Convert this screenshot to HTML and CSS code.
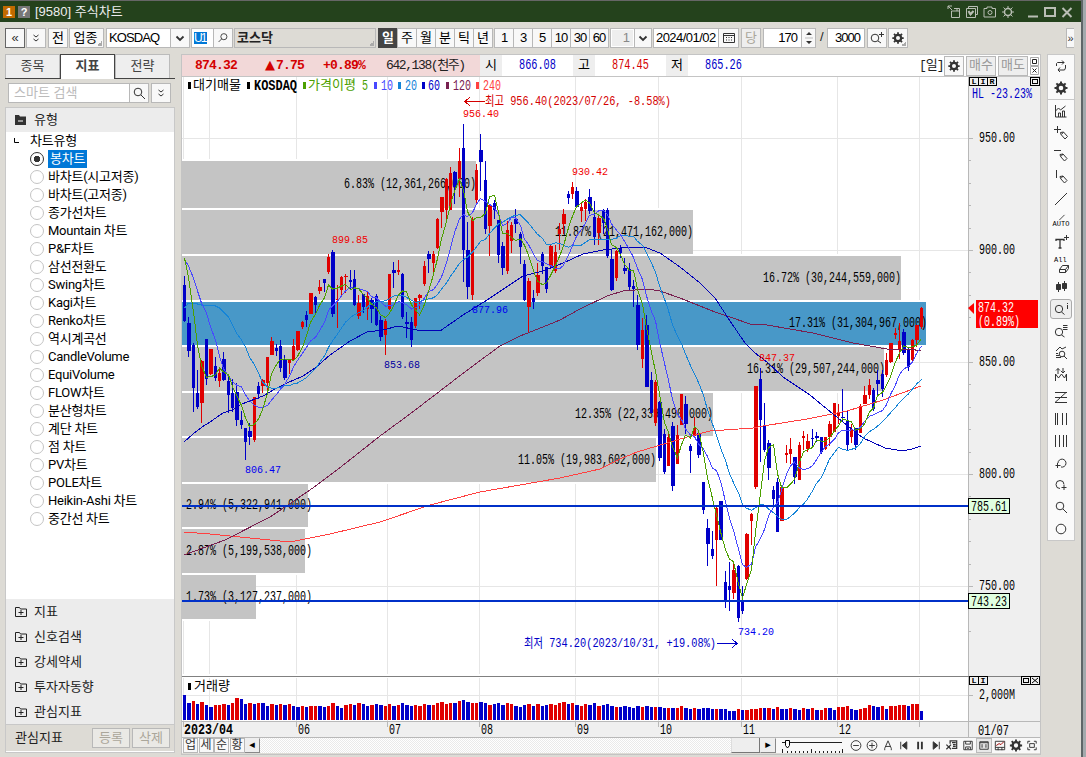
FILE: index.html
```
<!DOCTYPE html>
<html lang="ko">
  <head>
    <meta charset="UTF-8" />
    <title>[9580] 주식차트</title>
    <link rel="stylesheet" href="styles.css">
  </head>
  <body>
    <svg class="defs" width="0" height="0">
      <defs>
        <symbol id="gear" viewBox="0 0 16 16"><circle cx="8" cy="8" r="3.6" fill="none" stroke="currentColor" stroke-width="2.6"/><path d="M8 1.5v3M8 11.5v3M1.5 8h3M11.500 8h3M3.400 3.400l2 2M10.600 10.600l2 2M12.600 3.400l-2 2M5.400 10.600l-2 2" stroke-width="2"/></symbol>
        <symbol id="search" viewBox="0 0 16 16"><circle cx="7" cy="7" r="3.8"/><path d="M10 10l4 4"/></symbol>
        <symbol id="find" viewBox="0 0 16 16"><circle cx="9" cy="6.500" r="3.500"/><path d="M6.500 9L3 12.500"/></symbol>
        <symbol id="zoomplus" viewBox="0 0 16 16"><circle cx="6" cy="8" r="3.800"/><path d="M9 11l3 2M10 4.500h5M12.500 2v5"/></symbol>
        <symbol id="folder" viewBox="0 0 12 12"><path d="M.5 10.500v-9h4l1 1.500h6v7.500zM3.500 6.500h5M6 4v5"/></symbol>
        <symbol id="down" viewBox="0 0 10 10"><path d="M1.500 3.500L5 7l3.500-3.500" stroke-width="1.800"/></symbol>
        <symbol id="ddown" viewBox="0 0 10 10"><path d="M2.500 2L5 4l2.500-2M2.500 6L5 8l2.500-2"/></symbol>
        <symbol id="calendar" viewBox="0 0 12 12"><path d="M.5 1.500h11v9H.5zM.5 3.500h11M3 5.500h1M5.500 5.500h1M8 5.500h1M3 8h1M5.500 8h1M8 8h1"/></symbol>
      </defs>
    </svg>

    <div class="window">
      <header class="titlebar">
        <span class="badge orange">1</span>
        <span class="badge grey">?</span>
        <span class="title">[9580] 주식차트</span>
        <div class="window-icons">
          <svg width="14" height="14" viewBox="0 0 14 14"><path d="M1 4V1h4M1 1l4 4M4.500 6v6.500h8v-9H7M4.500 6h8M10 3v3"/></svg>
          <svg width="14" height="14" viewBox="0 0 14 14"><path d="M3.500 3V1.500h9v8H11M1.500 3.500h9v9h-9zM3.500 7.500l2 3 3-4" /><path d="M3.500 6l2 3 3-3" stroke-width="2"/></svg>
          <svg width="14" height="14" viewBox="0 0 14 14"><path d="M1 3.500h3V2h5v1.500h3.500v8.500H1z"/><circle cx="7" cy="7.500" r="2"/></svg>
          <svg width="14" height="14" viewBox="0 0 14 14"><circle cx="7" cy="7" r="3.500" stroke-width="1.500"/><path d="M7 1v2M7 11v2M1 7h2M11 7h2M2.500 2.500l1.500 1.500M10 10l1.500 1.500M11.500 2.500L10 4M4 10l-1.500 1.500"/></svg>
          <svg class="win" width="12" height="14" viewBox="0 0 12 14"><path d="M1 11.500h10" stroke-width="2"/></svg>
          <svg width="14" height="14" viewBox="0 0 14 14"><path d="M2 3h10v8H2z" stroke-width="2"/></svg>
          <svg width="12" height="14" viewBox="0 0 12 14"><path d="M1.500 3l9 9M10.500 3l-9 9" stroke-width="2"/></svg>
        </div>
      </header>

      <div class="toolbar">
        <div class="group spaced">
          <button class="sq strong">«</button>
          <button class="sq"><svg width="10" height="10"><use href="#ddown"/></svg></button>
        </div>
        <div class="group spaced">
          <button class="sq ink">전</button>
          <button class="ink wide corner">업종</button>
        </div>
        <div class="combo market"><span>KOSDAQ</span><i><svg width="10" height="10"><use href="#down"/></svg></i></div>
        <div class="combo code"><span><b>U1</b></span><i><svg width="14" height="14"><use href="#find"/></svg></i></div>
        <div class="name corner">코스닥</div>
        <div class="group joined period">
          <button class="on">일</button><button>주</button><button>월</button><button>분</button><button>틱</button><button>년</button>
        </div>
        <div class="group joined minutes">
          <button>1</button><button>3</button><button>5</button><button>10</button><button>30</button><button>60</button>
        </div>
        <div class="combo step"><span>1</span><i><svg width="10" height="10"><use href="#down"/></svg></i></div>
        <div class="combo date"><span>2024/01/02</span><i><svg width="12" height="12"><use href="#calendar"/></svg></i></div>
        <button class="sq off">당</button>
        <div class="combo count"><span>170</span><i class="spin"><svg width="8" height="16" viewBox="0 0 8 16"><path d="M0 8h8" stroke="#bbb"/><path d="M1 5l3-3 3 3zM1 11l3 3 3-3z" fill="currentColor" stroke="none"/></svg></i></div>
        <span class="slash">/</span>
        <div class="combo total"><span>3000</span></div>
        <div class="group">
          <button class="sq"><svg width="16" height="16"><use href="#zoomplus"/></svg></button>
          <button class="sq corner"><svg width="14" height="14"><use href="#gear"/></svg></button>
        </div>
        <button class="more">»</button>
      </div>

      <div class="workspace">
        <aside class="sidebar">
          <nav class="tabs"><a>종목</a><a class="active">지표</a><a>전략</a></nav>
          <div class="search">
            <div class="combo"><span>스마트 검색</span><i><svg width="16" height="16"><use href="#search"/></svg></i></div>
            <button class="sq"><svg width="10" height="10"><use href="#ddown"/></svg></button>
          </div>
          <div class="panel">
            <h2><svg width="11" height="10" viewBox="0 0 11 10"><path d="M0 0h4l1 1.500h6V10H0z" fill="#333" stroke="none"/><path d="M3 6h5" stroke="#fff"/></svg>유형</h2>
            <div class="tree">
              <p class="root"><svg width="6" height="6" viewBox="0 0 6 6"><path d="M.5 0v4.500H5"/></svg>차트유형</p>
              <ul>
                <li class="checked"><span>봉차트</span></li>
                <li><span>바차트(시고저종)</span></li>
                <li><span>바차트(고저종)</span></li>
                <li><span>종가선차트</span></li>
                <li><span>Mountain 차트</span></li>
                <li><span>P&amp;F차트</span></li>
                <li><span>삼선전환도</span></li>
                <li><span>Swing차트</span></li>
                <li><span>Kagi차트</span></li>
                <li><span>Renko차트</span></li>
                <li><span>역시계곡선</span></li>
                <li><span>CandleVolume</span></li>
                <li><span>EquiVolume</span></li>
                <li><span>FLOW차트</span></li>
                <li><span>분산형차트</span></li>
                <li><span>계단 차트</span></li>
                <li><span>점 차트</span></li>
                <li><span>PV차트</span></li>
                <li><span>POLE차트</span></li>
                <li><span>Heikin-Ashi 차트</span></li>
                <li><span>중간선 차트</span></li>
              </ul>
            </div>
            <ul class="sections">
              <li><svg width="12" height="12"><use href="#folder"/></svg>지표</li>
              <li><svg width="12" height="12"><use href="#folder"/></svg>신호검색</li>
              <li><svg width="12" height="12"><use href="#folder"/></svg>강세약세</li>
              <li><svg width="12" height="12"><use href="#folder"/></svg>투자자동향</li>
              <li><svg width="12" height="12"><use href="#folder"/></svg>관심지표</li>
            </ul>
            <footer><span>관심지표</span><button>등록</button><button>삭제</button></footer>
          </div>
        </aside>

        <main class="chart">
          <div class="quote">
            <div class="summary"><b class="last">874.32</b><b class="diff"><i>▲</i>7.75</b><b class="rate">+0.89%</b><span class="vol">642,138(천주)</span></div>
            <span class="key">시</span><span class="val">866.08</span>
            <span class="key">고</span><span class="val up">874.45</span>
            <span class="key">저</span><span class="val">865.26</span>
            <span class="unit">[일]</span>
            <button class="sq"><svg width="14" height="14"><use href="#gear"/></svg></button>
            <button class="trade">매수</button>
            <button class="trade">매도</button>
            <svg class="mini" width="9" height="18" viewBox="0 0 9 18"><path d="M.5.500h8v8h-8zM.5 9.500h8v8h-8z" stroke="#aaa"/><path d="M2.500 2.500h4v4h-4zM2.500 11.500l4 4M6.500 11.500l-4 4"/></svg>
          </div>
          <svg id="plot" width="858" height="661" viewBox="182 77 858 661"></svg>
          <div class="scrollrow">
            <button>업</button><button>세</button><button>순</button><button>황</button>
            <span class="arrow">◂</span>
            <div class="track"><div class="thumb"></div></div>
            <span class="arrow">▸</span>
            <svg class="slider" width="62" height="15" viewBox="0 0 62 15"><path d="M0 4.500h60M.5 11v4M5.500 13v2M9.500 13v2M13.500 13v2M17.500 13v2M21.500 13v2M25.500 13v2M29.500 11v4M33.500 13v2M37.500 13v2M41.500 13v2M45.500 13v2M49.500 13v2M53.500 13v2M57.500 13v2M60.500 11v4"/><path d="M3.500 2.500h4v5l-2 2.500-2-2.500z" fill="#fff" stroke="#000"/></svg>
            <div class="chart-icons">
              <svg viewBox="0 0 16 16"><circle cx="8" cy="8" r="5.200"/><path d="M5 8h6"/></svg>
              <svg viewBox="0 0 16 16"><circle cx="8" cy="8" r="5.200"/><path d="M5 8h6M8 5v6"/></svg>
              <svg viewBox="0 0 16 16"><path d="M4.500 13v-2L8 3l3.500 8v2M5.500 9h5"/></svg>
              <svg viewBox="0 0 16 16"><path d="M4.500 4v8"/><path d="M11 4v8L6 8z" fill="currentColor"/></svg>
              <svg viewBox="0 0 16 16"><path d="M6 4v8M10 4v8" stroke-width="2"/></svg>
              <svg viewBox="0 0 16 16"><path d="M11.500 4v8"/><path d="M5 4v8l5-4z" fill="currentColor"/></svg>
              <svg viewBox="0 0 16 16"><path d="M6 6V3h7v8H8M8 5h4M9 7h3M9 9h3M2 7l5 5M7 7l-5 5" stroke-width="1.300"/></svg>
              <svg viewBox="0 0 16 16"><path d="M3.500 3.500h9v9h-9zM5.500 3.500v3h5v-3M5.500 12.500v-3h5v3M7 11h2"/></svg>
              <svg class="pressed" viewBox="0 0 16 16"><path d="M3.500 4h9v8h-9zM3.500 5h9M5 7.500h2M5 9.500h2M9 7.500h2M9 9.500h2"/></svg>
              <svg viewBox="0 0 16 16"><path d="M3 3.500h10v9H3zM3 10h10M6 10v3M10 10v3"/><path d="M4 8l3-2 2 1 3-3" stroke="#a00000"/></svg>
              <svg><use href="#gear"/></svg>
              <svg viewBox="0 0 16 16"><path d="M3.500 6V3.500H6M10 3.500h2.500V6M12.500 10v2.500H10M6 12.500H3.500V10M5.500 6h5v4h-5z"/></svg>
            </div>
          </div>
        </main>

        <aside class="drawtools">
          <div><svg viewBox="0 0 16 16"><path d="M3.500 8V5.500l1-1H11M9 2.500l2 2-2 2M12.500 7v3l-1 2H5M7 9.500l-2 2.500 2 2"/></svg></div>
          <div class="end"><svg viewBox="0 0 16 16"><use href="#gear"/></svg></div>
          <div><svg viewBox="0 0 16 16"><path d="M2.500 2v12h11M2.500 8l3-3 2 2 5-4M5.500 14v-4h2v4M9.500 14V8h2v6"/></svg></div>
          <div><svg viewBox="0 0 16 16"><path d="M1 4.500h7M4.500 1v7M7.500 7.500l3-.5 4 4.500-2.500 2.500-4-4.500zM8.500 9.500l2-2.500"/></svg></div>
          <div><svg viewBox="0 0 16 16"><path d="M1 3.500h7M7 7.500l3-.5 4 4.500-2.500 2.500-4-4.500zM8 9.500l2-2.500"/></svg></div>
          <div><svg viewBox="0 0 16 16"><path d="M3.500 1v8M7 7.500l3-.5 4 4.500-2.500 2.500-4-4.500zM8 9.500l2-2.500"/></svg></div>
          <div><svg viewBox="0 0 16 16"><path d="M2 14L14 2"/></svg></div>
          <div class="auto"><svg viewBox="0 0 16 8"><path d="M6 7l6-6"/></svg><small>AUTO</small></div>
          <div><svg viewBox="0 0 16 16"><path d="M3 6V4.500h8V6M7 4.500V13M5.500 13h3" stroke-width="1.300"/><path d="M11 2.500h5M13.500 0v5"/></svg></div>
          <div class="all"><small>All</small><svg viewBox="0 0 16 10"><path d="M4.500 5.500l3-4h6l-3 4zM4.500 5.500v3h6v-3M10.500 8.500l3-4v-3"/></svg></div>
          <div><svg viewBox="0 0 16 16"><path d="M5.500 3v10M11.500 2v10"/><path d="M3.500 5.500h4v5h-4zM9.500 4.500h4v5h-4z" fill="currentColor"/></svg></div>
          <div class="pressed"><svg viewBox="0 0 16 16"><circle cx="6" cy="8" r="3.700"/><path d="M8.500 11l3 2.500M14.500 4v4M14.500 2v1"/></svg></div>
          <div><svg viewBox="0 0 16 16"><circle cx="6" cy="9" r="3.700"/><path d="M8.500 12l3 2M10 2.500h4.500M10 4.500h4.500M10 6.500h4.500"/></svg></div>
          <div><svg viewBox="0 0 16 16"><circle cx="9" cy="9" r="2.800"/><path d="M11 11l3 3M3 6l4-4 2 2 4-2M3 8.500h2M3 10.500h3M3 12.500h5"/></svg></div>
          <div><svg viewBox="0 0 16 16"><path d="M2.500 14V7l3 4 3-4 3 4 2-4v7M5 7V1.500M3 3.500l2-2 2 2M10 1v5M8 4l2 2 2-2"/></svg></div>
          <div><svg viewBox="0 0 16 16"><path d="M2 3.500h12M2 8.500h12M2 13.500h12M13 3.500l-11 10"/></svg></div>
          <div><svg viewBox="0 0 16 16"><path d="M2.500 2v12M4.500 2v12M9.500 2v12M13.500 2v12"/></svg></div>
          <div><svg viewBox="0 0 16 16"><path d="M2.500 2v12M6.500 2v12M10.500 2v12M13.500 2v12"/></svg></div>
          <div><svg viewBox="0 0 16 16"><path d="M5 8a4 4 0 1 1 3 4M2.500 10.500h5M4.500 8v5"/></svg></div>
          <div><svg viewBox="0 0 16 16"><path d="M11 7.500A4 4 0 1 0 7 11.500M8.500 10.500h5M11 8v5"/></svg></div>
          <div><svg viewBox="0 0 16 16"><use href="#search"/></svg></div>
          <div><svg viewBox="0 0 16 16"><circle cx="8" cy="8" r="4.800"/></svg></div>
        </aside>
      </div>
    </div>
    <script src="chart.js"></script>
  </body>
</html>
```
FILE: styles.css
```
* {
  box-sizing: border-box;
}
body {
  margin: 0;
  width: 1086px;
  height: 757px;
  overflow: hidden;
  background: #a3aaad;
  font: 13px/18px "Liberation Sans", "Noto Sans CJK KR", sans-serif;
  color: #222;
}
.defs {
  display: block;
}
svg {
  fill: none;
  stroke: currentColor;
  flex: none;
}
ul,
p,
h2 {
  margin: 0;
  padding: 0;
  list-style: none;
}
.window {
  width: 1083px;
  height: 757px;
  background: #dddbd5;
  border-right: 2px solid #5f6668;
}

/* title bar */
.titlebar {
  display: flex;
  align-items: center;
  gap: 3px;
  height: 22px;
  padding-left: 3px;
  border-top: 1px solid #666;
  background: #24421c;
  color: #eee;
}
.badge {
  width: 12px;
  height: 12px;
  font: bold 11px/12px "Liberation Sans";
  text-align: center;
  color: #fff;
}
.orange {
  background: #c06a00;
}
.grey {
  background: #777;
}
.title {
  margin-left: 2px;
}
.window-icons {
  display: flex;
  align-items: center;
  gap: 4px;
  margin: 0 8px 0 auto;
  color: #b9beb4;
}
.window-icons .win {
  margin-left: 8px;
}

/* toolbar */
.toolbar {
  display: flex;
  gap: 2px;
  height: 32px;
  padding: 6px 7px 0 5px;
}
button {
  position: relative;
  display: flex;
  align-items: center;
  justify-content: center;
  flex: none;
  height: 20px;
  padding: 0;
  border: 1px solid #b8b8b8;
  background: #f8f8f8;
  font: inherit;
  font-size: 13px;
  line-height: 18px;
  color: #333;
}
.sq {
  width: 20px;
}
.strong {
  border-color: #666;
}
.ink {
  color: #000;
}
.wide {
  width: 35px;
  padding-right: 2px;
}
.corner {
  background-image: linear-gradient(135deg, transparent 50%, #aaa 50%);
  background-size: 5px 5px;
  background-position: right 1px bottom 1px;
  background-repeat: no-repeat;
}
.group {
  display: flex;
  gap: 1px;
}
.joined {
  gap: 0;
  color: #000;
}
.joined button {
  width: 20px;
  margin-right: -1px;
  color: #000;
}
.period {
  width: 115px;
  margin-right: -1px;
}
.minutes {
  width: 114px;
}
.minutes button {
  letter-spacing: -1px;
}
.joined .on {
  background: #444;
  border-color: #444;
  color: #fff;
  font-weight: bold;
}
.combo {
  display: flex;
  flex: none;
  height: 20px;
  border: 1px solid #b8b8b8;
  background: #fff;
  color: #000;
  line-height: 18px;
}
.combo span {
  flex: 1;
  padding-left: 2px;
  white-space: nowrap;
}
.combo i {
  display: flex;
  align-items: center;
  justify-content: center;
  width: 19px;
  border-left: 1px solid #b8b8b8;
  background: #f8f8f8;
  color: #333;
}
.market {
  width: 84px;
  margin-right: -1px;
}
.market span {
  letter-spacing: -0.9px;
}
.code {
  width: 42px;
  margin-right: -1px;
}
.code b {
  display: block;
  width: 13px;
  height: 12px;
  margin-top: 3px;
  background: #0078d7;
  color: #fff;
  font: 12px/12px "Liberation Sans";
  letter-spacing: -2px;
}
.name {
  width: 142px;
  height: 20px;
  padding-left: 2px;
  border: 1px solid #b8b8b8;
  background-color: #dddbd5;
  font-weight: bold;
}
.step {
  width: 42px;
  margin-right: -1px;
}
.step span {
  margin: 1px;
  padding-right: 3px;
  background: #eee;
  text-align: right;
  color: #888;
  line-height: 16px;
}
.step i {
  width: 17px;
}
.date {
  width: 86px;
}
.date span {
  letter-spacing: -0.55px;
}
.date i {
  width: 20px;
}
.off {
  background: #eee;
  color: #aaa69a;
}
.count {
  width: 53px;
}
.count span,
.total span {
  padding-right: 4px;
  text-align: right;
  letter-spacing: -1px;
}
.count .spin {
  width: 14px;
}
.slash {
  width: 7px;
  padding-left: 2px;
}
.total {
  width: 38px;
}
.more {
  width: 8px;
  margin: 0 0 0 auto;
  border-right: 0;
  font-size: 11px;
}

.workspace {
  display: flex;
  gap: 6px;
  height: 703px;
  padding-left: 5px;
}

/* sidebar */
.sidebar {
  width: 170px;
}
.tabs {
  display: flex;
  height: 25px;
  border-bottom: 1px solid #444;
}
.tabs a {
  width: 55px;
  height: 24px;
  border: 1px solid #bbb;
  border-bottom: 0;
  background: #eee;
  text-align: center;
  line-height: 22px;
  color: #444;
}
.tabs .active {
  height: 25px;
  border-color: #444;
  background: #fff;
  font-weight: bold;
}
.search {
  display: flex;
  gap: 2px;
  padding: 4px 0 4px 3px;
}
.search .combo {
  width: 141px;
  color: #bbb;
}
.search .combo span {
  padding-left: 5px;
}
.panel {
  display: flex;
  flex-direction: column;
  height: 646px;
  border: 1px solid #c8c8c8;
  background: #fff;
}
.panel h2 {
  display: flex;
  align-items: center;
  gap: 8px;
  height: 24px;
  padding-left: 9px;
  background: #ececec;
  font-size: 13px;
  font-weight: normal;
}
.tree {
  flex: 1;
  font-family: Roboto, "Noto Sans CJK KR", sans-serif;
  letter-spacing: -0.25px;
  color: #000;
}
.tree .root {
  display: flex;
  align-items: center;
  gap: 10px;
  height: 18px;
  padding-left: 8px;
}
.tree li {
  display: flex;
  align-items: center;
  gap: 4px;
  height: 18px;
  padding-left: 24px;
}
.tree li::before {
  content: "";
  width: 12px;
  height: 12px;
  border: 1px solid #c4c4c4;
  border-radius: 50%;
}
.tree .checked::before {
  border-color: #333;
  background: radial-gradient(#333 3px, #fff 3.5px);
}
.tree span {
  margin-left: -1px;
  padding: 0 2px 0 1px;
}
.tree .checked span {
  margin-left: 0;
  padding-left: 2px;
  background: #0078d7;
  color: #fff;
}
.sections {
  height: 125px;
  background: #ececec;
}
.sections li {
  display: flex;
  align-items: center;
  gap: 7px;
  height: 25px;
  padding-left: 9px;
}
.panel footer {
  display: flex;
  align-items: center;
  gap: 2px;
  height: 28px;
  padding: 0 4px 0 9px;
  border-top: 1px solid #c8c8c8;
  border-bottom: 1px solid #fff;
  background: #dddbd5;
}
.panel footer span {
  flex: 1;
}
.panel footer button {
  width: 38px;
  background: #eae9e5;
  color: #aaa69a;
}

/* chart */
.chart {
  width: 860px;
  height: 701px;
  border: 1px solid #c4c4c4;
}
.quote {
  display: flex;
  align-items: center;
  height: 22px;
  border-bottom: 1px solid #c4c4c4;
  background: #fff;
  font-family: "Liberation Mono", "Noto Sans CJK KR", monospace;
  line-height: 21px;
}
.summary {
  display: flex;
  width: 298px;
  height: 21px;
  padding-left: 13px;
  background: #f2d8d8;
  color: #d40000;
  letter-spacing: -0.8px;
}
.last {
  width: 70px;
}
.diff {
  width: 58px;
}
.diff i {
  display: inline-block;
  width: 11px;
  font: 13px/19px "DejaVu Sans";
}
.rate {
  width: 63px;
}
.vol {
  color: #222;
  letter-spacing: -1.4px;
  white-space: nowrap;
}
.key {
  width: 22px;
  height: 21px;
  background: #eee;
  text-align: center;
  color: #000;
}
.val {
  width: 71px;
  text-align: center;
  font-size: 14px;
  transform: scaleX(0.73);
  color: #0000c8;
}
.up {
  color: #d40000;
}
.unit {
  width: 25px;
  margin-left: auto;
  letter-spacing: -1px;
}
.quote button {
  margin-right: 2px;
}
.trade {
  width: 30px;
  background: #eee;
  color: #999;
}
.quote .mini {
  margin-right: 1px;
}
#plot {
  display: block;
  background: #fff;
  stroke: none;
}
#plot text {
  font-family: "Liberation Mono", "Noto Sans CJK KR", monospace;
}
.scrollrow {
  display: flex;
  align-items: center;
  height: 15px;
  background: #f8f8f8;
}
.scrollrow button {
  width: 15px;
  height: 15px;
  margin-left: 1px;
  margin-right: -0.5px;
  font-size: 12px;
  line-height: 13px;
}
.arrow {
  width: 16px;
  height: 15px;
  border: 1px solid #888;
  border-top-color: #eee;
  border-left-color: #eee;
  background: #eee;
  color: #000;
  font: 11px/12px "DejaVu Sans";
  text-align: center;
}
.track {
  display: flex;
  justify-content: flex-end;
  flex: 1;
  height: 15px;
  background: repeating-conic-gradient(#fff 0 25%, #eaeaea 0 50%) 0 0 / 2px 2px;
}
.thumb {
  width: 29px;
  border-right: 1px solid #777;
  border-bottom: 1px solid #777;
  border-left: 1px solid #ddd;
  background: #eee;
}
.slider {
  margin: 0 4px 0 6px;
}
.chart-icons {
  display: flex;
  color: #333;
}
.chart-icons svg {
  width: 16px;
  height: 15px;
}
.chart-icons .pressed {
  outline: 1px solid #bbb;
  outline-offset: -1px;
  background: #e8e8e8;
}

/* drawing tools */
.drawtools {
  width: 28px;
  height: 487px;
  border: 1px solid #c8c8c8;
  background: #fafafa;
  color: #333;
}
.drawtools div {
  display: flex;
  align-items: center;
  justify-content: center;
  height: 22px;
}
.drawtools .end {
  height: 23px;
  border-bottom: 1px solid #c8c8c8;
}
.drawtools svg {
  width: 16px;
  height: 16px;
}
.drawtools .auto,
.drawtools .all {
  flex-direction: column;
}
.drawtools .auto svg {
  height: 7px;
}
.drawtools small {
  font: 7px/7px "Liberation Mono";
  color: #000;
}
.drawtools .all small {
  align-self: flex-start;
  margin-left: 6px;
}
.drawtools .all svg {
  height: 10px;
  margin-left: 4px;
}
.drawtools .pressed {
  width: 22px;
  height: 20px;
  margin: 1px auto;
  border: 1px solid #aaa;
  border-radius: 3px;
  background: #eee;
}
```
FILE: chart.js
```
const RED = "#e00000";
const BLUE = "#0000c8";
const plot = document.getElementById("plot");

// colour, high, body top, body bottom, low
const candles = `
b276,285,321,322 b317,323,351,357 b343,345,388,412 b370,393,407,409 r360,361,403,423
b339,339,379,385 r349,349,374,375 b357,366,378,381 r368,373,381,387 b352,359,380,381
b377,381,395,413 b379,393,408,412 b383,392,420,426 b411,420,425,429 b428,428,442,460
b423,431,437,445 r397,397,440,442 b382,386,394,399 r379,380,386,393 r357,357,383,390
r337,341,355,355 b344,348,351,356 b340,346,368,372 b355,360,378,380 r359,359,363,374
r339,346,360,361 r331,331,350,351 r321,322,327,329 b311,315,320,327 r293,293,314,314
b296,297,305,314 r280,287,291,294 b279,279,283,292 r254,257,272,274 b250,252,314,317
r285,299,300,328 r276,277,290,297 r274,276,277,293 b270,280,282,290 b270,279,305,306
r295,303,316,319 b294,294,307,313 r291,296,309,320 b298,300,309,323 b294,296,325,326
b316,320,337,341 r319,321,335,355 r274,274,309,310 b262,270,273,288 r260,270,272,275
b273,274,317,319 b312,322,324,338 b317,322,340,347 r298,298,326,328 r294,295,298,309
r261,266,284,286 b251,254,259,273 r251,254,263,272 r218,219,248,249 r197,197,212,228
r178,179,210,220 r167,173,210,210 b171,172,187,204 r148,161,179,197 b124,148,250,282
b222,250,287,299 r217,219,295,300 r164,170,200,203 b134,150,162,191 b161,180,229,234
r204,205,226,256 b200,203,210,219 b220,220,255,263 b242,246,268,275 r221,230,271,274
r222,225,241,253 b209,219,224,233 b232,234,247,264 b260,264,300,301 r278,281,307,333
b290,298,302,309 r263,275,293,296 b252,254,266,274 b267,267,289,293 r245,246,266,268
r245,252,271,273 r223,229,234,250 r209,214,224,234 b191,194,198,204 r182,187,194,199
b187,191,207,207 r203,207,211,222 r199,202,209,221 b189,197,211,214 b201,217,237,245
r215,218,233,245 b209,210,223,234 b208,210,256,258 b250,259,290,291 r250,251,278,281
b245,248,253,258 b258,268,271,274 b263,269,287,290 b280,286,289,307 b295,305,345,350
r318,330,359,368 b315,325,387,387 b372,380,413,413 r380,382,423,426 b401,402,458,461
b429,434,472,474 r433,437,466,466 b422,426,486,491 r425,435,464,464 r394,394,425,425
b396,404,424,434 b444,446,451,473 r417,428,436,436 b430,433,455,458 b482,482,510,514
b519,528,544,566 b531,549,556,559 r507,508,540,586 b501,501,540,540 b571,582,601,608
b562,586,590,611 r563,570,593,599 b565,566,618,622 b586,602,611,614 r533,534,579,580
r513,514,521,545 r386,386,487,489 b368,379,420,462 b403,426,450,452 b440,443,468,480
b486,490,499,507 b478,482,532,532 r485,487,521,521 r445,453,455,463 r438,449,454,464
b457,457,477,484 r442,445,480,480 r431,436,438,450 r434,441,449,452 b429,438,439,448
b432,436,438,442 b437,437,452,454 r437,437,449,450 r421,424,437,446 r403,403,432,432
r404,413,416,424 b389,417,418,422 b411,420,445,450 r424,429,437,443 b428,428,445,450
r404,406,433,433 r386,395,404,404 r379,385,395,399 b388,390,409,411 b370,380,384,395
b370,374,389,397 r353,360,375,377 r343,343,362,363 r328,333,335,339 r323,341,349,359
b329,332,353,355 b347,349,367,371 r339,340,360,362 r325,325,340,347 r307,308,327,329
`.trim().split(/\s+/).map((s) => {
  const [high, top, bottom, low] = s.slice(1).split(",").map(Number);
  return { up: s[0] === "r", high, top, bottom, low };
});

const volumes = `
b25 b17 r19 b16 r18 b15 b13 r15 r15 r16 b15 r17 r22 b21 b16 r17 b16 r17 b17 b14
r16 b15 r16 b15 r16 b14 b13 r14 b13 r14 r14 b14 b13 r14 r17 b14 b12 r15 r16 b15
r17 b16 b14 r15 b16 b15 r14 r16 b14 r15 b17 b15 b14 r15 r14 r16 b15 r15 r17 r18
r16 r17 b17 r19 b20 b18 r17 r17 b18 b17 r15 b16 b17 b15 r17 r16 b14 b13 b15 r16
b14 r16 b14 b15 r16 r15 r17 r18 b16 r17 b15 r14 r16 b15 b17 r14 b15 b16 b14 r13
b13 b14 b13 b12 b14 r13 b14 b13 r13 b13 b12 r12 b12 r12 r14 b12 b11 r12 b11 b12
b12 b11 r11 b11 b11 b9 b9 r11 b10 r10 r11 r11 r12 b12 r12 b11 r13 b11 b11 r12
b11 b10 r12 b11 r12 b10 r10 r12 b12 b10 r13 r13 r14 b11 b10 r11 r12 r15 b14 b13
r14 b11 r14 r14 r15 r15 b14 r16 r16 b9
`.trim().split(/\s+/);

// bands of the volume profile: top, bottom, right edge, label x, label
const bands = [
  [161, 208, 476, 344, "6.83% (12,361,266,000)"],
  [210, 254, 693, 555, "11.87% (21,471,162,000)"],
  [256, 300, 901, 763, "16.72% (30,244,559,000)"],
  [302, 345, 926, 789, "17.31% (31,304,967,000)"],
  [347, 391, 884, 747, "16.31% (29,507,244,000)"],
  [393, 436, 713, 575, "12.35% (22,339,490,000)"],
  [438, 482, 656, 518, "11.05% (19,983,602,000)"],
  [484, 527, 308, 186, "2.94% (5,322,941,000)"],
  [529, 573, 305, 186, "2.87% (5,199,538,000)"],
  [575, 619, 256, 186, "1.73% (3,127,237,000)"],
];

const barX = (i) => Math.floor(184.5 + i * 4.36);
let out = "";

function rect(x, y, w, h, fill, extra = "") {
  out += `<rect x="${x}" y="${y}" width="${w}" height="${h}" fill="${fill}" shape-rendering="crispEdges" ${extra}/>`;
}
function line(points, stroke, width = 1) {
  out += `<polyline points="${points}" fill="none" stroke="${stroke}" stroke-width="${width}" shape-rendering="crispEdges"/>`;
}
function width(str) {
  return [...str].reduce((sum, c) => sum + (c > "\u1000" ? 12 : 6), 0);
}
// y is the vertical middle of the text
function text(x, y, str, fill = "#000", size = 14, len = width(str), weight = "normal") {
  out += `<text x="${x}" y="${y + size * 0.34}" fill="${fill}" font-size="${size}" font-weight="${weight}" textLength="${len}" lengthAdjust="spacingAndGlyphs" xml:space="preserve">${str}</text>`;
}
function average(days, seed) {
  const close = candles.map((c) => (c.up ? c.top : c.bottom));
  return candles.map((c, i) => {
    let y = seed[i];
    if (y === undefined) {
      y = close.slice(i - days + 1, i + 1).reduce((a, b) => a + b) / days;
    }
    return `${barX(i) + 0.5},${y.toFixed(1)}`;
  }).join(" ");
}

// grid
for (const x of [183, 209, 296, 387, 479, 575, 658, 741, 837, 919]) {
  rect(x, 77, 1, 597, "#e6e6e6");
  rect(x, 678, 1, 43, "#e6e6e6");
}
for (const y of [138, 250, 362, 474, 586, 695]) rect(182, y, 786, 1, "#e6e6e6");

bands.forEach(([top, bottom, right], i) => {
  rect(182, top - 2, right - 182, bottom - top + 4, "#fff");
  rect(182, top, right - 182, bottom - top, i === 3 ? "#4898c8" : "#c4c4c4");
});
bands.forEach(([top, bottom, , x, label]) => text(x, (top + bottom) / 2 - 1, label));

candles.forEach((c, i) => {
  const x = barX(i);
  const color = c.up ? RED : BLUE;
  rect(x, c.high, 1, Math.max(1, c.low - c.high), color);
  rect(x - 1, c.top, barX(i + 1) - x - 1, Math.max(1, c.bottom - c.top), color);
});

line("184,532 210,534 250,538 290,542 330,534 380,522 430,505 480,492 520,485 560,478 600,469 620,459 637,452 657,446 687,437 710,431 753,428 763,426 807,419 847,411 883,400 921,386", "#ff4040");
line("184,555 225,540 270,517 310,490 337,470 380,436 410,414 440,391 470,368 500,346 520,336 538,329 560,320 580,309 607,296 623,291 647,289 660,291 680,298 700,306 715,312 730,317 750,324 767,325 813,333 853,343 887,349 910,349 921,351", "#782050");
line("184,442 193,434 202,427 210,422 223,413 232,410 242,404 263,396 275,389 287,383 303,376 315,368 330,355 350,341 367,332 383,330 398,326 417,330 440,331 463,315 487,300 523,276 543,271 563,263 583,254 603,250 630,247 647,248 660,253 680,267 700,283 715,298 730,321 745,343 755,353 767,362 783,377 810,395 833,414 843,422 863,438 885,448 903,451 912,449 921,446", "#0000b8");
line(average(20, [308, 303, 303, 304, 305, 305, 305, 306, 308, 312, 317, 325, 333, 340, 347, 357, 365, 373, 382]), "#1484d8");
line(average(10, [259, 266, 278, 291, 303, 313, 327, 340, 356]), "#4848ff");
line(average(5, [258, 277, 312, 345]), "#4ca000");

// horizontal alert lines
rect(182, 505, 786, 2, "#0030c8");
rect(182, 600, 786, 2, "#0030c8");

// turning points
[
  [463, 113, "956.40", "#f00000"], [332, 239, "899.85", "#f00000"],
  [572, 171, "930.42", "#f00000"], [759, 357, "847.37", "#f00000"],
  [472, 309, "877.96", "#0000f0"], [384, 364, "853.68", "#0000a0"],
  [245, 469, "806.47", "#0000f0"], [738, 631, "734.20", "#0000f0"],
].forEach(([x, y, s, fill]) => text(x, y, s, fill, 11));

text(485, 101, "최고 956.40(2023/07/26, -8.58%)", "#d40000", 13);
line("485,101.500 465,101.500", "#d40000");
line("470,97 465,101.500 470,106", "#d40000");
text(524, 643, "최저 734.20(2023/10/31, +19.08%)", BLUE, 13);
line("717,643.500 737,643.500", BLUE);
line("732,639 737,643.500 732,648", BLUE);

// legend
[
  [188, 193, "대기매물", "#000", 48], [247, 254, "KOSDAQ", "#000", 43],
  [303, 308, "가격이평", "#4ca000", 48], [0, 362, "5", "#4ca000", 6],
  [374, 381, "10", "#4848ff", 12], [398, 405, "20", "#1484d8", 12],
  [422, 428, "60", "#0000c8", 12], [446, 453, "120", "#782050", 18],
  [476, 483, "240", "#ff4040", 18],
].forEach(([mark, x, s, fill, len]) => {
  if (mark) rect(mark, 82, 3, 7, fill);
  text(x, 85, s, fill, s > "\u1000" ? 13 : 14, len, s === "KOSDAQ" ? "bold" : "normal");
});

// volume pane
volumes.forEach((v, i) => {
  const h = Number(v.slice(1));
  rect(barX(i) - 1, 720 - h, barX(i + 1) - barX(i) - 1, h, v[0] === "r" ? RED : BLUE);
});
rect(188, 683, 3, 7, "#000");
text(194, 686, "거래량", "#000", 13);

// axes
rect(968, 77, 72, 661, "#efefef");
rect(182, 722, 858, 16, "#efefef");
rect(968, 77, 1, 661, "#b8b8b8");
rect(182, 721, 858, 1, "#b8b8b8");
rect(182, 676, 858, 1, "#808080");
rect(182, 737, 858, 1, "#b8b8b8");
for (let y = 138, n = 0; y < 650; y += 22.4, n++) {
  rect(968, Math.round(y), n % 5 ? 3 : 5, 1, "#b8b8b8");
}
[950, 900, 850, 800, 750].forEach((p, i) => text(979, 137 + i * 112, p + ".00"));
rect(968, 695, 5, 1, "#b8b8b8");
text(979, 694, "2,000M");
text(972, 93, "HL -23.23%", BLUE);
text(184, 729, "2023/04", "#000", 14, 49, "bold");
[[296, "06"], [387, "07"], [479, "08"], [575, "09"], [658, "10"], [741, "11"], [837, "12"], [919, ""]].forEach(([x, s]) => {
  rect(x, 722, 1, 5, "#b8b8b8");
  if (s) text(x + 2, 729, s);
});
rect(183, 722, 1, 5, "#b8b8b8");
text(978, 730, "01/07", "#000", 14, 31);

// current price and alert values
out += `<path d="M968 308l6-5v11z" fill="#ff0000"/>`;
rect(976, 300, 62, 28, "#ff0000");
text(978, 307, "874.32", "#fff");
text(978, 321, "(0.89%)", "#fff");
[[498, "785.61"], [593, "743.23"]].forEach(([y, s]) => {
  rect(968.5, y + 0.5, 41, 15, "#e0ffe0", 'stroke="#000"');
  text(971, y + 8, s);
});

// pane buttons
function paneButton(x, y, s) {
  rect(x + 0.5, y + 0.5, 9, 8, "#efefef", 'stroke="#000"');
  if (s === "□") rect(x + 2.5, y + 2.5, 5, 4, "none", 'stroke="#000"');
  else if (s === "x") out += `<path d="M${x + 2} ${y + 2}l6 5m0-5l-6 5" stroke="#000"/>`;
  else text(x + 2.5, y + 4.5, s, "#000", 8, 5, "bold");
}
paneButton(969, 77, "L");
paneButton(978, 77, "I");
paneButton(987, 77, "R");
paneButton(1030, 77, "□");
paneButton(969, 676, "L");
paneButton(978, 676, "I");
paneButton(1021, 676, "□");
paneButton(1030, 676, "x");

plot.innerHTML = out;
```
